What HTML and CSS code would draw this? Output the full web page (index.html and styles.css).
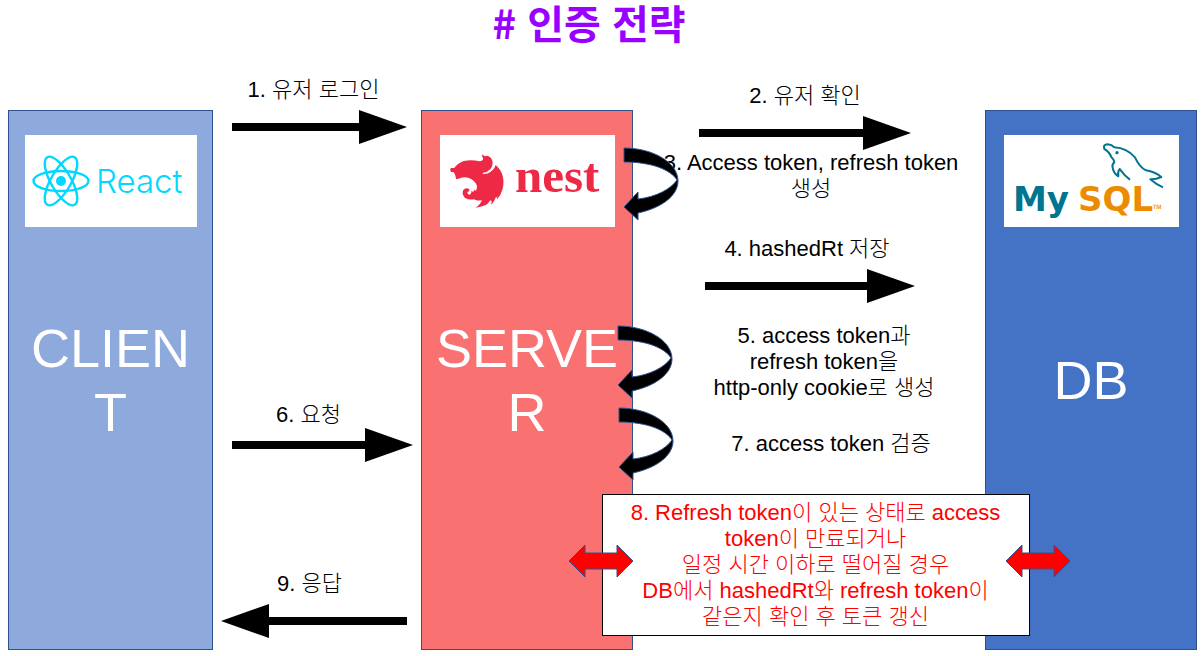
FILE: index.html
```html
<!DOCTYPE html>
<html lang="ko">
<head>
<meta charset="utf-8">
<meta name="viewport" content="width=device-width, initial-scale=1">
<title>인증 전략</title>
<link rel="stylesheet" href="styles.css">
</head>
<body>
<svg class="defs" aria-hidden="true">
  <symbol id="loop" viewBox="0 0 56 75">
    <path d="M1 1C29 1 55 15 55 34C55 49 38 61 15 66V73L1 60L15 45V52C33 50 48 42 54 33C48 23 29 15 1 15Z"/>
  </symbol>
  <symbol id="exchange" viewBox="0 0 66 36">
    <path d="M1 18L17 2V10H49V2L65 18L49 34V26H17V34Z"/>
  </symbol>
</svg>
<header class="header"><h1 class="title"># 인증 전략</h1></header>
<main class="diagram">
  <section class="node client">
    <svg class="logo" viewBox="0 0 172 92" role="img" aria-label="React">
      <g class="react-mark">
        <circle class="core" cx="36" cy="46" r="5"/>
        <ellipse cx="36" cy="46" rx="27.5" ry="10"/>
        <ellipse cx="36" cy="46" rx="27.5" ry="10" transform="rotate(60 36 46)"/>
        <ellipse cx="36" cy="46" rx="27.5" ry="10" transform="rotate(120 36 46)"/>
      </g>
      <text class="react-name" x="71" y="58">React</text>
    </svg>
    <h2 class="name">CLIENT</h2>
  </section>

  <div class="lane lane-left">
    <div class="step">
      <p class="label">1. 유저 로그인</p>
      <div class="arrow"></div>
    </div>
    <div class="step request">
      <p class="label">6. 요청</p>
      <div class="arrow"></div>
    </div>
    <div class="step response">
      <p class="label">9. 응답</p>
      <div class="arrow back"></div>
    </div>
  </div>

  <section class="node server">
    <svg class="logo" viewBox="0 0 175 92" role="img" aria-label="nest">
      <g class="nest-mark" transform="translate(-25.5 -35) scale(.3333)">
        <path d="M107 208L110 204L119 204Q130 189 148 183Q171 178 195 184Q205 183 206 176Q205 170 199 166L204 168L203 163L211 169L217 167Q232 171 234 184Q236 197 228 207Q219 217 206 219Q222 221 234 211Q240 205 243 195Q259 208 264 226Q270 248 264 268Q259 287 247 299L249 288Q240 307 229 314L233 302Q216 318 183 323Q199 313 202 300Q190 304 178 298Q163 301 151 293Q141 282 146 271Q152 262 163 266Q168 273 159 276Q158 283 166 284Q172 279 171 272L176 276L181 268L184 274Q189 265 187 256Q180 239 161 233Q146 230 137 235L125 238L122 225L118 217L109 216Z"/>
        <path class="gap" d="M205 220Q229 222 241 196M218 316L229 302M238 309L246 293"/>
      </g>
      <text class="nest-name" x="75" y="57">nest</text>
    </svg>
    <h2 class="name">SERVER</h2>
    <svg class="loop loop-issue" aria-hidden="true"><use href="#loop"/></svg>
    <svg class="loop loop-cookie" aria-hidden="true"><use href="#loop"/></svg>
    <svg class="loop loop-verify" aria-hidden="true"><use href="#loop"/></svg>
  </section>

  <div class="lane lane-right">
    <div class="step find">
      <p class="label">2. 유저 확인</p>
      <div class="arrow"></div>
    </div>
    <p class="label issue">3. Access token, refresh token<br>생성</p>
    <div class="step store">
      <p class="label">4. hashedRt 저장</p>
      <div class="arrow"></div>
    </div>
    <p class="label cookie">5. access token과<br>refresh token을<br>http-only cookie로 생성</p>
    <p class="label verify">7. access token 검증</p>
  </div>

  <section class="node db">
    <svg class="logo" viewBox="0 0 175 92" role="img" aria-label="MySQL">
      <g class="dolphin" transform="translate(-23 -35) scale(.3333)">
        <path d="M447 239L430 224L416 207Q409 216 412 229Q396 217 395 202Q392 195 400 187Q399 178 391 171Q384 154 370 147Q365 134 380 133Q392 134 400 142Q437 144 462 172Q475 201 495 211Q523 216 541 231Q524 239 508 238Q525 253 546 262"/>
        <circle cx="408" cy="158" r="5"/>
      </g>
      <text class="mysql-name" y="76"><tspan class="my" x="9">My</tspan><tspan class="sql" x="74">SQL</tspan></text>
      <text class="trademark" x="149" y="78">™</text>
    </svg>
    <h2 class="name">DB</h2>
  </section>

  <aside class="renewal">
    <p class="label">8. Refresh token이 있는 상태로 access<br>token이 만료되거나<br>일정 시간 이하로 떨어질 경우<br>DB에서 hashedRt와 refresh token이<br>같은지 확인 후 토큰 갱신</p>
    <svg class="exchange to-server" aria-hidden="true"><use href="#exchange"/></svg>
    <svg class="exchange to-db" aria-hidden="true"><use href="#exchange"/></svg>
  </aside>
</main>
</body>
</html>
```
FILE: styles.css
```css
* { box-sizing: border-box; }

body {
  margin: 0;
  background: #fff;
  color: #000;
  font-family: "Liberation Sans", "Noto Sans CJK KR", sans-serif;
  font-size: 22px;
  font-weight: 300;
  line-height: 26px;
}

.defs { position: absolute; width: 0; height: 0; }

.header { padding: 0 25px 10px 0; }

.title {
  margin: 0;
  color: #90f;
  font-family: "Noto Sans CJK KR", sans-serif;
  font-size: 40px;
  font-weight: 700;
  line-height: 44px;
  text-align: center;
}

.diagram {
  position: relative;
  display: grid;
  grid-template-columns: 205fr 208fr 212fr 352fr 212fr;
  padding: 0 6px 6px 8px;
}

.node {
  position: relative;
  display: grid;
  justify-items: center;
  min-width: 0;
  min-height: 540px;
  margin-top: 56px;
  padding: 0 13px;
  border: 1px solid #2f528f;
}
.client { background: #8ea9db; }
.server { background: #f97171; }
.db { background: #4472c4; }

.logo {
  grid-area: 1 / 1;
  align-self: start;
  width: 100%;
  max-width: 175px;
  height: 92px;
  margin-top: 24px;
  background: #fff;
}
.client .logo { max-width: 172px; }

.name {
  grid-area: 1 / 1;
  align-self: center;
  width: 100%;
  margin: 0;
  color: #fff;
  font-size: 54px;
  font-weight: 400;
  line-height: 64px;
  text-align: center;
  overflow-wrap: anywhere;
}

.lane-left { padding: 23px 14px 0 19px; }
.lane-right { padding-top: 29px; }

.label { margin: 0; text-align: center; }
.lane-left .label { padding-right: 12px; }

.arrow {
  display: flex;
  align-items: center;
  margin-top: 7px;
}
.arrow::before {
  content: "";
  flex: 1;
  height: 8px;
  background: #000;
}
.arrow::after {
  content: "";
  width: 48px;
  height: 34px;
  background: #000;
  clip-path: polygon(0 0, 100% 50%, 0 100%);
}
.arrow.back { flex-direction: row-reverse; }
.arrow.back::after { clip-path: polygon(100% 0, 0 50%, 100% 100%); }

.request { margin-top: 258px; }
.request .label { padding-right: 22px; }
.request .arrow { margin: 0 -6px 0 0; }
.response { margin-top: 109px; }
.response .label { padding-right: 20px; }
.response .arrow { margin-left: -11px; }

.find { padding: 0 74px 0 66px; }
.issue { padding-left: 4px; }
.store { margin-top: 34px; padding: 0 70px 0 72px; }
.store .label { margin: 0 -40px; padding-right: 6px; }
.cookie { margin-top: 20px; padding-left: 30px; }
.verify { margin-top: 30px; padding-left: 44px; }

.loop {
  position: absolute;
  z-index: 1;
  width: 56px;
  height: 75px;
  fill: #000;
  stroke: #2f528f;
}
.loop-issue { top: 36px; right: -47px; }
.loop-cookie { top: 214px; right: -41px; }
.loop-verify { top: 296px; right: -42px; }

.renewal {
  position: absolute;
  z-index: 2;
  top: 440px;
  left: 50%;
  width: 428px;
  padding: 5px 0;
  border: 1px solid #000;
  background: #fff;
  color: #f00;
}

.exchange {
  position: absolute;
  top: 48px;
  width: 66px;
  height: 36px;
  fill: #f00;
  stroke: #2f528f;
}
.to-server { left: -35px; }
.to-db { right: -42px; }

.react-mark { fill: none; stroke: #00d8ff; stroke-width: 2.4; }
.react-mark .core { fill: #00d8ff; stroke: none; }
.react-name { fill: #00d8ff; font: 300 33px Inter, sans-serif; }

.nest-mark { fill: #ed2945; }
.nest-mark .gap { fill: none; stroke: #fff; stroke-width: 4; }
.nest-name { fill: #ed2945; font: 700 49px "Liberation Serif", serif; }

.dolphin { fill: none; stroke: #00758f; stroke-width: 6; stroke-linejoin: round; }
.dolphin circle { fill: #00758f; stroke: none; }
.mysql-name { font: 700 34px "DejaVu Sans", sans-serif; }
.my { fill: #00758f; }
.sql { fill: #ec8b00; }
.trademark { fill: #ec8b00; font: 400 12px "Open Sans", sans-serif; }
```
